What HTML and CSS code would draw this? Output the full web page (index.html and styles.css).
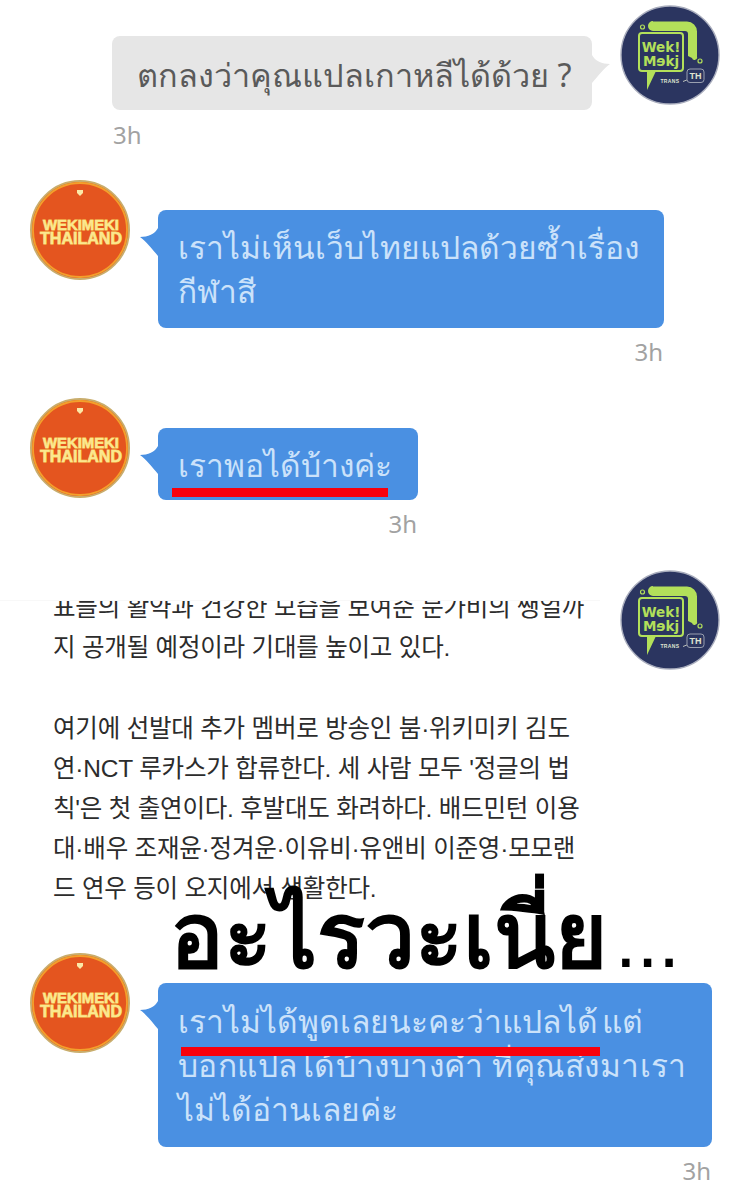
FILE: index.html
```html
<!DOCTYPE html>
<html lang="th">
<head>
<meta charset="utf-8">
<title>แชท</title>
<link rel="stylesheet" href="styles.css">
</head>
<body>
<svg class="defs" width="0" height="0" aria-hidden="true">
  <defs>
    <symbol id="trans" viewBox="0 0 100 100">
      <circle cx="50" cy="50" r="49" fill="#2b3560" stroke="#a9adbd" stroke-width="1.4"/>
      <path d="M33 16.500h34a10 10 0 0 1 10 10v25a2.500 2.500 0 0 1-5 1.500l-4-2v-22a3 3 0 0 0-3-3h-32a4.500 4.500 0 0 1 0-10z" fill="#b3e05a"/>
      <rect x="19" y="28" width="44" height="38" rx="3" fill="#2b3560" stroke="#b3e05a" stroke-width="2"/>
      <path d="M27 65v20l9-19z" fill="#b3e05a"/>
      <circle cx="22.500" cy="22" r="2" fill="none" stroke="#b3e05a" stroke-width="1.200"/>
      <circle cx="80" cy="56" r="2" fill="none" stroke="#b3e05a" stroke-width="1.200"/>
      <text x="41" y="46.500" class="lg-wek">Wek!</text>
      <text x="41" y="61" class="lg-wek">Mɘkj</text>
      <text x="50" y="78" class="lg-trans">TRANS</text>
      <path d="M63 76.500l5-2" stroke="#dfe3d0" stroke-width=".8" fill="none"/>
      <rect x="67" y="64" width="17" height="13.500" rx="3" fill="#2b3560" stroke="#9aa0b0" stroke-width="1"/>
      <text x="75.500" y="74" class="lg-th">TH</text>
    </symbol>
    <symbol id="thai" viewBox="0 0 100 100">
      <circle cx="50" cy="50" r="49" fill="#e4551f" stroke="#c9ad6c" stroke-width="2"/>
      <circle cx="50" cy="50" r="47" fill="none" stroke="#f3a02c" stroke-width="1.800"/>
      <path d="M47 10h6v3l-3 3-3-3z" fill="#fbe9a8"/>
      <text x="51" y="50" class="lg-wm" textLength="76" lengthAdjust="spacingAndGlyphs">WEKIMEKI</text>
      <text x="51" y="63.500" class="lg-tl" textLength="82" lengthAdjust="spacingAndGlyphs">THAILAND</text>
    </symbol>
  </defs>
</svg>

<main class="chat">
  <section class="msg msg-me msg-first">
    <div class="line">
      <div class="bubble bubble-gray">ตกลงว่าคุณแปลเกาหลีได้ด้วย ?</div>
      <svg class="avatar"><use href="#trans"/></svg>
    </div>
    <p class="time time-left">3h</p>
  </section>

  <section class="msg msg-them msg-second">
    <div class="line">
      <svg class="avatar"><use href="#thai"/></svg>
      <div class="stack stack-a">
        <div class="bubble bubble-blue">เราไม่เห็นเว็บไทยแปลด้วยซ้ำเรื่อง<br>กีฬาสี</div>
        <p class="time">3h</p>
      </div>
    </div>
  </section>

  <section class="msg msg-them msg-third">
    <div class="line">
      <svg class="avatar"><use href="#thai"/></svg>
      <div class="stack stack-b">
        <div class="bubble bubble-blue">เราพอได้บ้างค่ะ<span class="redline redline-short"></span></div>
        <p class="time">3h</p>
      </div>
    </div>
  </section>

  <section class="news">
    <svg class="avatar news-avatar"><use href="#trans"/></svg>
    <div class="news-clip">
      <p class="news-text">표들의 활약과 건강한 모습을 보여준 문가비의 쌩얼까<br>지 공개될 예정이라 기대를 높이고 있다.</p>
      <p class="news-text news-para">여기에 선발대 추가 멤버로 방송인 붐·위키미키 김도<br>연·NCT 루카스가 합류한다. 세 사람 모두 '정글의 법<br>칙'은 첫 출연이다. 후발대도 화려하다. 배드민턴 이용<br>대·배우 조재윤·정겨운·이유비·유앤비 이준영·모모랜<br>드 연우 등이 오지에서 생활한다.</p>
    </div>
    <div class="shout">อะไรวะเนี่ย<span class="shout-dots">...</span></div>
  </section>

  <section class="msg msg-them msg-last">
    <div class="line">
      <svg class="avatar"><use href="#thai"/></svg>
      <div class="stack stack-c">
        <div class="bubble bubble-blue bubble-tall"><span class="tight">เราไม่ได้พูดเลยนะคะว่าแปลได้ แต่</span><br><span class="wide">บอกแปลได้บ้างบางคำ ที่คุณส่งมาเรา</span><br>ไม่ได้อ่านเลยค่ะ<span class="redline redline-long"></span></div>
        <p class="time">3h</p>
      </div>
    </div>
  </section>
</main>
</body>
</html>
```
FILE: styles.css
```css
* { box-sizing: border-box; }
html, body { margin: 0; padding: 0; background: #fff; }
body {
  width: 750px;
  height: 1194px;
  overflow: hidden;
  font-family: "Noto Sans", "DejaVu Sans", "Liberation Sans", sans-serif;
}
.defs { position: absolute; }
.chat { display: flex; flex-direction: column; }
.msg { display: block; }
.line { display: flex; align-items: flex-start; }
.avatar { width: 100px; height: 100px; flex: none; }
.msg-me .line { justify-content: flex-end; padding-right: 30px; padding-top: 5px; }
.msg-them .line { padding-left: 30px; }
.msg-first { height: 180px; }
.msg-second { height: 218px; }
.msg-third { height: 202px; }

.bubble {
  position: relative;
  font-size: 31.7px;
  line-height: 44px;
  padding: 15px 20px;
  border-radius: 8px;
}
.bubble-tall { padding: 16px 20px; }
.bubble::before {
  content: "";
  position: absolute;
  top: 18px;
  width: 18px;
  height: 28px;
  clip-path: path("M18 0 C15 6 8 9 0 9 C6 13 12 21 18 28 Z");
}
.bubble-gray {
  width: 480px;
  height: 74px;
  margin: 31px 28px 0 0;
  padding: 16px 25px;
  background: #e6e6e6;
  color: #5a5a5a;
  font-size: 32.4px;
  white-space: nowrap;
}
.bubble-gray::before {
  right: -18px;
  top: 19px;
  background: #e6e6e6;
  transform: scaleX(-1);
}
.bubble-blue {
  background: #4a90e2;
  color: #cbe2fa;
}
.bubble-blue::before {
  left: -18px;
  background: #4a90e2;
}
.tight { word-spacing: -4px; }
.wide { letter-spacing: .45px; }
.stack { margin: 30px 0 0 28px; display: flex; flex-direction: column; align-items: flex-end; }
.stack-a { width: 506px; }
.stack-b { width: 260px; }
.stack-c { width: 554px; }
.stack-a .bubble, .stack-b .bubble, .stack-c .bubble { width: 100%; }
.stack-b .bubble { padding-bottom: 13px; }
.time {
  margin: 9px 1px 0 0;
  font-size: 24px;
  line-height: 30px;
  color: #a2a2a2;
}
.time-left { margin: 10px 0 0 113px; }
.redline {
  position: absolute;
  background: #f8000c;
  height: 9px;
}
.redline-short { left: 14px; top: 60px; width: 216px; }
.redline-long { left: 23px; top: 64px; width: 419px; }

.news { position: relative; height: 353px; }
.news-avatar { position: absolute; right: 30px; top: -30px; }
.news-clip {
  width: 600px;
  height: 305px;
  overflow: hidden;
  padding-left: 53px;
  border-top: 1px solid #f8f8f8;
}
.news-text {
  margin: -13px 0 0;
  font-family: "Liberation Sans", "Noto Sans CJK KR", sans-serif;
  font-size: 24.5px;
  line-height: 40px;
  letter-spacing: -.2px;
  color: #2c2c2c;
  white-space: nowrap;
}
.news-para { margin-top: 41px; }
.shout {
  position: absolute;
  left: 170px;
  top: 272px;
  font-size: 89.5px;
  line-height: 120px;
  font-weight: 700;
  color: #000;
  white-space: nowrap;
}
.shout-dots {
  margin-left: 8px;
  font-family: "Liberation Sans", sans-serif;
  font-size: 78px;
  font-weight: 400;
}

.lg-wek { font: 700 13.500px "DejaVu Sans", sans-serif; fill: #b3e05a; text-anchor: middle; }
.lg-trans { font: 700 5px "Liberation Sans", sans-serif; fill: #dfe3d0; text-anchor: middle; letter-spacing: .4px; }
.lg-th { font: 700 9px "Liberation Sans", sans-serif; fill: #dfe3d0; text-anchor: middle; }
.lg-wm, .lg-tl {
  font-family: "Liberation Sans", sans-serif;
  font-weight: 700;
  fill: #fbe88f;
  text-anchor: middle;
  stroke: #f7d866;
  stroke-width: .9px;
  paint-order: stroke;
}
.lg-wm { font-size: 15px; }
.lg-tl { font-size: 16.500px; }
```
